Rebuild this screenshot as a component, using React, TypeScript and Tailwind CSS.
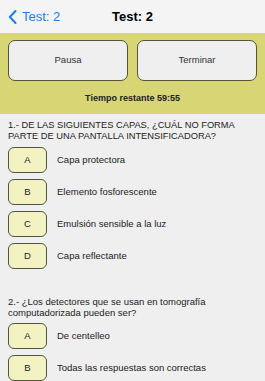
import React from "react";

const q1 = [
  ["A", "Capa protectora"],
  ["B", "Elemento fosforescente"],
  ["C", "Emulsión sensible a la luz"],
  ["D", "Capa reflectante"],
];
const q2 = [
  ["A", "De centelleo"],
  ["B", "Todas las respuestas son correctas"],
];

function Option({ letter, text }: { letter: string; text: string }) {
  return (
    <div className="flex items-center h-[26px]">
      <div className="w-[39px] h-[26px] shrink-0 rounded-[6px] border-[1.5px] border-[#55553f] bg-[#f3f2c3] flex items-center justify-center text-[9.5px] text-[#222]">
        {letter}
      </div>
      <div className="ml-[10px] text-[9.5px] text-[#222]">{text}</div>
    </div>
  );
}

export default function App() {
  return (
    <div
      className="w-[265px] h-[381px] overflow-hidden bg-[#efefef]"
      style={{ fontFamily: '"Liberation Sans", Arial, sans-serif' }}
    >
      <div className="h-[33px] bg-[#f4f4f4] relative flex items-center">
        <div className="flex items-center pl-[8px] text-[#1d7cf2]">
          <svg width="9" height="14" viewBox="0 0 9 14" fill="none">
            <path d="M7.5 1 L1.8 7 L7.5 13" stroke="#1d7cf2" strokeWidth="2" strokeLinecap="round" strokeLinejoin="round" />
          </svg>
          <span className="ml-[5px] text-[13px]">Test: 2</span>
        </div>
        <div className="absolute left-0 right-0 text-center font-bold text-[13px] text-black pointer-events-none">
          Test: 2
        </div>
      </div>
      <div className="bg-[#d8d574] px-[8px] pt-[7px] pb-[10px]">
        <div className="flex gap-[9px]">
          <div className="flex-1 h-[41px] rounded-[7px] border-[1.5px] border-[#55533a] bg-[#efefef] flex items-center justify-center text-[9.5px] text-[#333]">
            Pausa
          </div>
          <div className="flex-1 h-[41px] rounded-[7px] border-[1.5px] border-[#55533a] bg-[#efefef] flex items-center justify-center text-[9.5px] text-[#333]">
            Terminar
          </div>
        </div>
        <div className="mt-[11px] text-center font-bold text-[9px] leading-[12px] text-[#222]">
          Tiempo restante 59:55
        </div>
      </div>
      <div className="px-[8px] pt-[6px]">
        <div className="text-[9.3px] leading-[11px] text-[#222]">
          1.- DE LAS SIGUIENTES CAPAS, ¿CUÁL NO FORMA PARTE DE UNA PANTALLA INTENSIFICADORA?
        </div>
        <div className="mt-[5px] flex flex-col gap-[6px]">
          {q1.map(([l, t]) => (
            <Option key={l + t} letter={l} text={t} />
          ))}
        </div>
        <div className="mt-[27px] text-[9.5px] leading-[11px] text-[#222]">
          2.- ¿Los detectores que se usan en tomografía computadorizada pueden ser?
        </div>
        <div className="mt-[5px] flex flex-col gap-[6px]">
          {q2.map(([l, t]) => (
            <Option key={l + t} letter={l} text={t} />
          ))}
        </div>
      </div>
    </div>
  );
}
